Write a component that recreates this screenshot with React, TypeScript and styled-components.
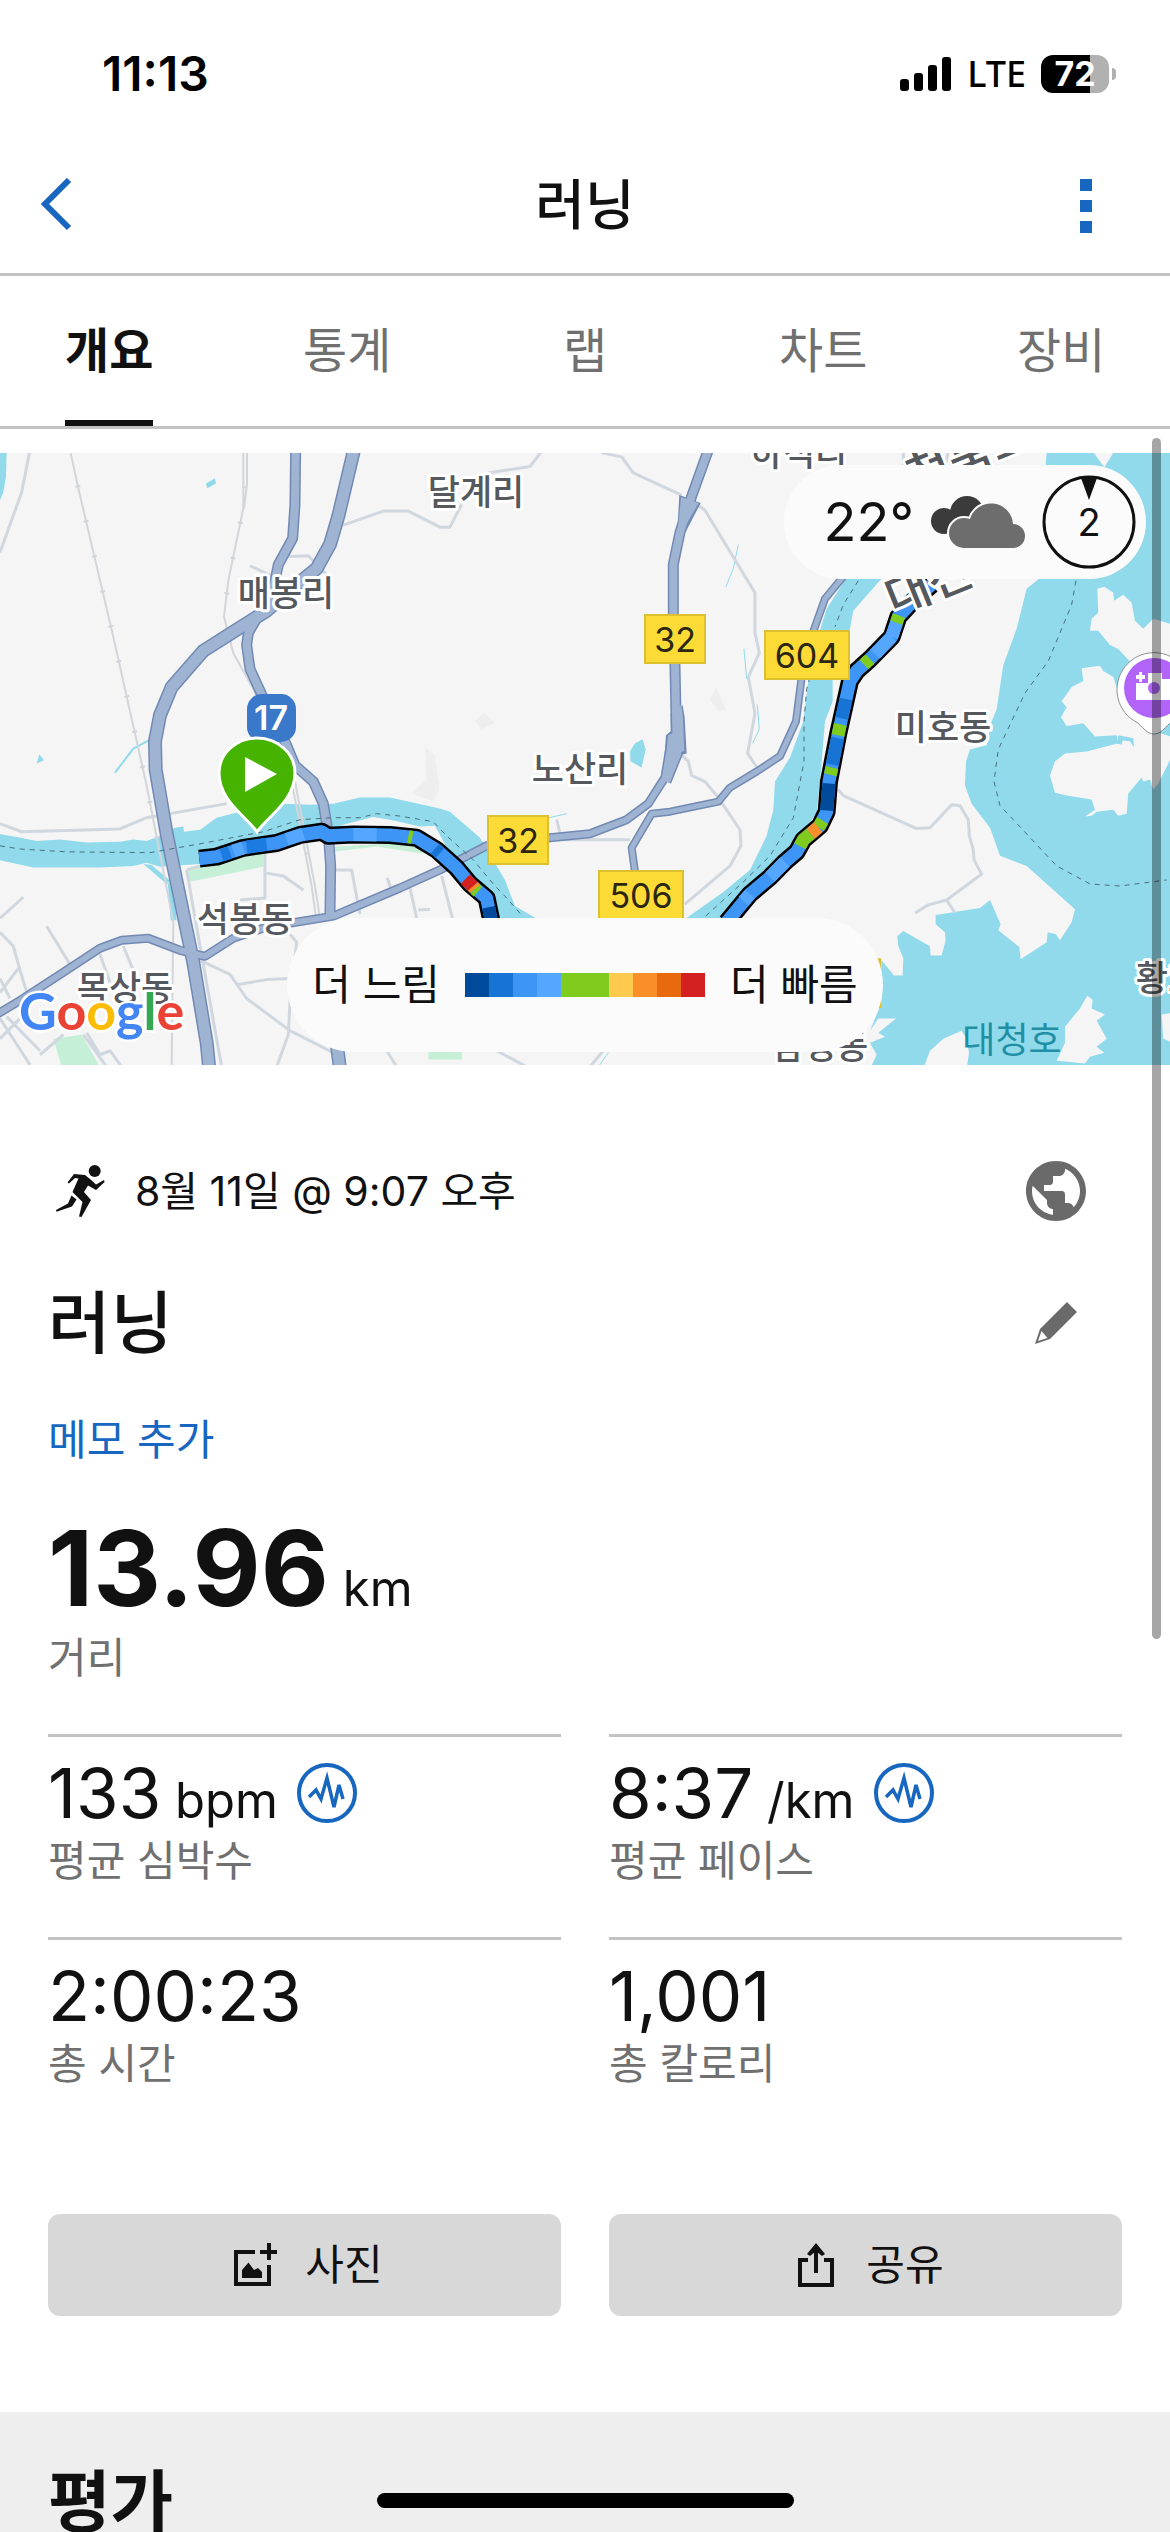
import React from "react";
import styled, { createGlobalStyle } from "styled-components";
import { MdPublic } from "react-icons/md";

const ink = "#111111";
const muted = "#707070";
const link = "#1766bf";
const rule = "#c3c3c3";
const sans = `Inter, "Noto Sans CJK KR", sans-serif`;

const GlobalStyle = createGlobalStyle`
  *, *::before, *::after { box-sizing: border-box; }
  body { margin: 0; background: #ffffff; }
  button { font: inherit; color: inherit; border: 0; padding: 0; background: none; cursor: pointer; }
  h1, h2, p, dl, dt, dd { margin: 0; font-weight: inherit; }
`;

const Screen = styled.div`
  position: relative;
  display: flex;
  flex-direction: column;
  height: 100vh;
  overflow: hidden;
  background: #ffffff;
  color: ${ink};
  font-family: ${sans};
`;

/* Status bar */

const StatusBar = styled.div`
  display: flex;
  flex: none;
  align-items: center;
  justify-content: space-between;
  height: 138px;
  padding: 10px 54px 0 102px;
  color: #000000;
`;

const Clock = styled.time`
  font-size: 48px;
  font-weight: 600;
  line-height: 54px;
`;

const StatusIcons = styled.div`
  display: flex;
  align-items: center;
  gap: 15px;
`;

const Carrier = styled.span`
  font-family: "Noto Sans", sans-serif;
  font-size: 36px;
  font-weight: 500;
  line-height: 44px;
`;

const Battery = styled.div`
  display: flex;
  align-items: center;
  gap: 3px;
`;

const BatteryBody = styled.div<{ $level: number }>`
  width: 68px;
  height: 38px;
  border-radius: 12px;
  background: linear-gradient(to right, #000000 ${(p) => p.$level}%, #b1b1b1 ${(p) => p.$level}%);
  color: #ffffff;
  font-size: 34px;
  font-weight: 700;
  line-height: 38px;
  text-align: center;
`;

const BatteryCap = styled.div`
  width: 4px;
  height: 12px;
  border-radius: 0 6px 6px 0;
  background: #b1b1b1;
`;

/* Header and tabs */

const Header = styled.header`
  display: grid;
  grid-template-columns: 96px 1fr 96px;
  flex: none;
  align-items: center;
  height: 138px;
  padding: 0 30px;
  border-bottom: 3px solid ${rule};
`;

const HeaderTitle = styled.h1`
  font-size: 54px;
  font-weight: 500;
  line-height: 66px;
  text-align: center;
`;

const HeaderButton = styled.button<{ $end?: boolean }>`
  display: flex;
  align-items: center;
  justify-content: ${(p) => (p.$end ? "flex-end" : "flex-start")};
  height: 96px;
  padding: ${(p) => (p.$end ? "0 48px 0 0" : "0 0 0 8px")};

  svg { flex: none; }
`;

const Tabs = styled.nav`
  display: flex;
  flex: none;
  justify-content: space-between;
  height: 153px;
  padding: 0 65px;
  border-bottom: 3px solid ${rule};
`;

const Tab = styled.button<{ $active?: boolean }>`
  width: 88px;
  padding-top: 6px;
  border-bottom: 6px solid ${(p) => (p.$active ? ink : "transparent")};
  color: ${(p) => (p.$active ? ink : muted)};
  font-size: 48px;
  font-weight: ${(p) => (p.$active ? 700 : 400)};
  line-height: 60px;
  white-space: nowrap;
`;

/* Map */

const MapFrame = styled.section`
  position: relative;
  flex: none;
  height: 612px;
  margin-top: 24px;
  overflow: hidden;
  background: #f5f5f5;
`;

const MapDrawing = styled.svg`
  display: block;
  width: 100%;
  height: 100%;
  font-family: ${sans};
`;

const PlaceName = styled.text`
  fill: #55585d;
  stroke: #ffffff;
  stroke-width: 6px;
  stroke-linejoin: round;
  paint-order: stroke;
  font-size: 35px;
  font-weight: 500;
  text-anchor: middle;
`;

const RegionName = styled(PlaceName)`
  font-size: 48px;
  text-anchor: start;
`;

const LakeName = styled.text`
  fill: #1f8fa3;
  font-size: 36px;
  text-anchor: middle;
`;

const BadgeText = styled.text`
  fill: #2a2611;
  font-size: 34px;
  text-anchor: middle;
`;

const HighwayText = styled(BadgeText)`
  fill: #ffffff;
  font-weight: 600;
`;

const GoogleText = styled.text`
  font-family: Lato, sans-serif;
  font-size: 52px;
  font-weight: 700;
  stroke: #ffffff;
  stroke-width: 5px;
  paint-order: stroke;
`;

const WeatherPill = styled.div`
  position: absolute;
  top: 12px;
  right: 24px;
  display: flex;
  align-items: center;
  gap: 17px;
  height: 114px;
  padding: 0 10px 0 40px;
  border-radius: 57px;
  background: #fbfbfb;
`;

const Temperature = styled.span`
  font-size: 54px;
  line-height: 66px;
`;

const Wind = styled.div`
  display: grid;
  place-items: center;
  width: 94px;
  height: 94px;
  font-size: 38px;
  line-height: 46px;

  > * { grid-area: 1 / 1; }
`;

const LegendRow = styled.div`
  position: absolute;
  bottom: 13px;
  left: 0;
  right: 0;
  display: flex;
  justify-content: center;
`;

const Legend = styled.div`
  display: flex;
  align-items: center;
  gap: 25px;
  height: 134px;
  padding: 0 25px;
  border-radius: 67px;
  background: #fbfbfb;
  font-size: 42px;
  line-height: 54px;
`;

const LegendScale = styled.div`
  display: flex;
`;

const LegendStep = styled.span<{ $color: string }>`
  width: 24px;
  height: 24px;
  background: ${(p) => p.$color};
`;

/* Activity summary */

const Summary = styled.main`
  display: flex;
  flex: none;
  flex-direction: column;
  padding: 90px 48px 96px;
`;

const SummaryRow = styled.div<{ $height: number }>`
  display: flex;
  align-items: center;
  justify-content: space-between;
  height: ${(p) => p.$height}px;
  padding-right: 30px;
`;

const DateLine = styled.p`
  display: flex;
  align-items: center;
  gap: 27px;
  padding-left: 8px;
  font-size: 41px;
  line-height: 54px;
`;

const ActivityName = styled.h2`
  font-size: 68px;
  font-weight: 500;
  line-height: 84px;
`;

const IconButton = styled.button`
  display: grid;
  place-items: center;
  width: 72px;
  height: 72px;
  color: #6a6a6a;
`;

const Spacer = styled.div`
  height: 54px;
`;

const NoteLink = styled.a`
  align-self: flex-start;
  margin-top: 45px;
  color: ${link};
  font-size: 42px;
  line-height: 60px;
  text-decoration: none;
`;

const Distance = styled.dl`
  display: flex;
  flex-direction: column-reverse;
  gap: 6px;
  margin: 38px 0 52px;
`;

const DistanceValue = styled.dd`
  font-size: 105px;
  font-weight: 700;
  line-height: 120px;
`;

const Unit = styled.span`
  font-size: 49px;
  font-weight: 400;
  line-height: 1;
`;

const StatLabel = styled.dt`
  color: ${muted};
  font-size: 42px;
  line-height: 48px;
`;

const Stats = styled.dl`
  display: grid;
  grid-template-columns: 1fr 1fr;
  column-gap: 48px;
`;

const Stat = styled.div`
  display: flex;
  flex-direction: column-reverse;
  gap: 2px;
  padding: 14px 0 52px;
  border-top: 3px solid ${rule};
`;

const StatValue = styled.dd`
  display: flex;
  align-items: center;
  gap: 19px;
  font-size: 69px;
  line-height: 84px;
`;

const Actions = styled.div`
  display: grid;
  grid-template-columns: 1fr 1fr;
  gap: 48px;
  margin-top: 74px;
`;

const ActionButton = styled.button`
  display: flex;
  align-items: center;
  justify-content: center;
  gap: 27px;
  height: 102px;
  padding-left: 8px;
  border-radius: 12px;
  background: #d8d8d8;
  font-size: 42px;
  line-height: 54px;
`;

const Review = styled.section`
  flex: 1 0 120px;
  padding: 48px;
  background: #eeeeee;
`;

const ReviewTitle = styled.h2`
  font-size: 68px;
  font-weight: 700;
  line-height: 84px;
`;

const ScrollThumb = styled.div`
  position: absolute;
  top: 438px;
  right: 9px;
  width: 9px;
  height: 1201px;
  border-radius: 5px;
  background: rgba(0, 0, 0, 0.35);
`;

const HomeRow = styled.div`
  position: absolute;
  bottom: 24px;
  left: 0;
  right: 0;
  display: flex;
  justify-content: center;
`;

const HomeIndicator = styled.div`
  width: 417px;
  height: 15px;
  border-radius: 8px;
  background: #000000;
`;

/* Icons */

const SignalIcon = () => (
  <svg width="52" height="34" viewBox="0 0 52 34" aria-hidden="true">
    <rect x="0" y="22" width="9" height="12" rx="3" />
    <rect x="14" y="16" width="9" height="18" rx="3" />
    <rect x="28" y="8" width="9" height="26" rx="3" />
    <rect x="42" y="0" width="9" height="34" rx="3" />
  </svg>
);

const BackIcon = () => (
  <svg width="36" height="56" viewBox="0 0 36 56" fill="none" stroke={link} strokeWidth="6" aria-hidden="true">
    <path d="M31 2 L7 26 L31 50" />
  </svg>
);

const MoreIcon = () => (
  <svg width="12" height="54" viewBox="0 0 12 54" fill={link} aria-hidden="true">
    <path d="M0 0H12V12H0Z M0 21H12V33H0Z M0 42H12V54H0Z" />
  </svg>
);

const CloudIcon = () => (
  <svg width="94" height="52" viewBox="0 0 94 52" aria-hidden="true">
    <g fill="#3b3b3b">
      <circle cx="36" cy="17" r="17" />
      <circle cx="13" cy="25" r="13" />
    </g>
    <path
      d="M33 52 A15 15 0 0 1 33 22 Q36 22 39 23 A22 22 0 0 1 82 28 A12 12 0 0 1 82 52Z"
      fill="#6d6d6d"
      stroke="#fbfbfb"
      strokeWidth="4"
      paintOrder="stroke"
    />
  </svg>
);

const WindDial = () => (
  <svg width="94" height="94" viewBox="0 0 94 94" aria-hidden="true">
    <circle cx="47" cy="47" r="45" fill="none" stroke={ink} strokeWidth="3" />
    <path d="M39 3 H55 L47 25Z" fill={ink} />
  </svg>
);

const RunnerIcon = () => (
  <svg width="52" height="52" viewBox="0 0 52 52" fill={ink} aria-hidden="true">
    <circle cx="38.7" cy="6" r="6" />
    <path d="M18 9 L29 10 L34 14 L40 19.5 L48 15 L48.6 17 L40 25 L32 20.5 L28 27 L35 35 L25.5 52 L23 51.5 L26.5 37 L16.5 27 L22.5 13.5 L19 13 L13 18.5 L11.5 17.5Z" />
    <path d="M15.5 30.5 L20.5 34.5 L16 41.5 L0.5 46.8 L0 45 L12 38.5Z" />
  </svg>
);

const PencilIcon = () => (
  <svg width="42" height="42" viewBox="0 0 42 42" aria-hidden="true">
    <path
      fillRule="evenodd"
      fill="currentColor"
      d="M32 0 L42 10 L15 37 L0 42 L5 27Z M6.5 29 L3 39 L12.5 36Z"
    />
  </svg>
);

const PulseIcon = () => (
  <svg width="60" height="60" viewBox="0 0 60 60" fill="none" stroke={link} aria-hidden="true">
    <circle cx="30" cy="30" r="28" strokeWidth="4" />
    <path d="M12 34 L19 27 L24 36 L30 15 L37 44 L42 22 L46 36" strokeWidth="3.5" />
  </svg>
);

const PhotoIcon = () => (
  <svg width="44" height="44" viewBox="0 0 44 44" aria-hidden="true">
    <path d="M21 9 H2 V41 H35 V22 M35 0 V17 M26 9 H43" fill="none" stroke={ink} strokeWidth="4" />
    <path d="M8 35 V27 L14.5 19.5 L20 27 L24 25 L28 29 V35Z" fill={ink} />
  </svg>
);

const ShareIcon = () => (
  <svg width="44" height="44" viewBox="-3 0 44 44" aria-hidden="true">
    <path d="M10 17 H2 V42 H34 V17 H26 M18 6 V30" fill="none" stroke={ink} strokeWidth="4" />
    <path d="M18 0 L27 11 L24 13 L18 8 L12 13 L9 11Z" fill={ink} />
  </svg>
);

const sheets = { west: 0, mid: 390, east: 770 };

const Sheet = ({ at, children }: { at: keyof typeof sheets; children: React.ReactNode }) => (
  <g transform={`translate(${sheets[at]} -13) scale(0.3333 0.4018)`}>{children}</g>
);

const Line = ({ d, color, width, dash }: { d: string; color: string; width: number; dash?: string }) => (
  <path
    d={d}
    fill="none"
    stroke={color}
    strokeWidth={width}
    strokeDasharray={dash}
    strokeLinejoin="round"
    vectorEffect="non-scaling-stroke"
  />
);

const water = "#90daec";
const land = "#f5f5f5";
const park = "#c5efd6";

type Road = { at: keyof typeof sheets; width: number; d: string };

const roads: Road[] = [
  { at: "west", width: 9, d: "M-10 1430 L60 1395 L180 1330 L300 1265 L365 1245 L445 1240 L540 1270 L615 1285 L700 1240 L800 1212 L1000 1185 L1200 1115 L1320 1070 L1460 1010 L1650 990 L1770 980 L1880 945 L1945 905 L1995 840 L2015 740" },
  { at: "east", width: 8, d: "M-405 1075 L-415 1015 L-355 930 L-300 925 L-155 900 L-120 865 L-40 825 L30 787 L78 700 L95 590 L120 500 L165 395 L225 335" },
  { at: "mid", width: 11, d: "M955 25 L905 140 L870 230 L850 310 L850 440 L855 560 L858 680 L862 780 L828 850" },
  { at: "west", width: 11, d: "M887 25 L885 160 L878 245 L835 310 L820 370 L780 430 L745 480 L740 510 L750 570 L800 660 L860 760 L885 810 L940 850 L970 905 L985 980 L992 1060 L990 1185" },
  { at: "west", width: 14, d: "M1062 25 L1015 190 L990 260 L950 320 L905 350 L800 425 L610 525 L515 615 L480 685 L465 750 L467 820 L500 980 L580 1300 L620 1500 L628 1565" },
  { at: "west", width: 14, d: "M1010 1500 L1020 1565" },
];

const lanes: { at: keyof typeof sheets; d: string }[] = [
  { at: "west", d: "M90 25 L65 130 L0 280 M1030 212 L1150 177 L1225 177 L1320 217 L1350 217 L1385 160 M0 955 L65 975 L360 968 L440 940 L680 905 M865 290 L925 288 L980 335 M750 313 L820 340 M0 1190 L70 1138 M140 1210 L210 1305 M370 1260 L410 1340 M300 1280 L330 1350 M560 1070 L600 1260 L665 1560 M600 1295 L690 1330 L740 1390 L870 1470 L1000 1525 M715 1355 L800 1343 L870 1340 M870 1230 L890 1250 L870 1400 L865 1480 L830 1560 M560 1070 L600 1060 M795 1030 L795 1140 L720 1145 M800 1078 L850 1085 L910 1120 M1000 1070 L1055 1070 L1080 1180 M1162 1090 L1172 1115 M0 1225 L40 1260 L60 1320 L90 1400 M0 1375 L60 1310 M0 1340 L30 1390 M0 1440 L90 1555 M20 1435 L120 1520 M0 1490 L60 1440 M120 1530 L190 1480 M260 1475 L300 1530 L330 1520 L365 1560 M250 1480 L320 1560" },
  { at: "mid", d: "M295 82 L420 66 L458 25 M635 32 L695 42 L730 82 L875 137 M915 157 L945 175 L1095 380 L1095 480 L1108 530 L1075 590 L1095 680 L1073 780 L1105 820 M870 780 L895 800 L905 835 L945 850 L985 890 L1050 970 L1053 1010 L1020 1060 L885 1155 M500 945 L515 995 L720 995 M60 1115 L80 1190 M85 1170 L120 1168 M155 1085 L187 1190 M320 1520 L410 1560 M640 1520 L600 1560 M-10 1520 L20 1560" },
  { at: "east", d: "M205 870 L220 885 L440 967 L480 965 L545 908 L570 910 L595 945 L598 985 L610 1020 L612 1045 L635 1080 L530 1145 L475 1157 L435 1177 M530 1145 L555 1177 M400 25 L400 70 M425 25 L425 70 M535 25 L525 70" },
];

const routeWest = "M598 1042 L650 1037 L730 1015 L830 1003 L900 983 L965 975 L985 985 L1060 982 L1170 983 L1250 990 L1310 1020 L1370 1065 L1410 1105 L1460 1140 L1475 1200";
const routeEast = "M-130 1200 L-60 1130 L0 1088 L45 1050 L80 1025 L100 995 L150 960 L170 925 L177 850 L205 730 L240 600 L260 575 L300 545 L365 490 L385 440 L430 400 L485 360";

const paceMarks: { at: keyof typeof sheets; color: string; d: string }[] = [
  { at: "west", color: "#1b7be0", d: "M665 1034 L690 1027 M740 1013 L800 1006" },
  { at: "west", color: "#54a6ff", d: "M700 1023 L730 1015 M860 994 L910 981 M1060 982 L1130 983" },
  { at: "west", color: "#7fcb1e", d: "M1225 987 L1237 989 M1424 1117 L1434 1124" },
  { at: "west", color: "#1874d4", d: "M1305 1017 L1320 1028" },
  { at: "west", color: "#d42020", d: "M1396 1093 L1420 1112" },
  { at: "west", color: "#fa8f2a", d: "M1419 1111 L1425 1117" },
  { at: "west", color: "#004a9c", d: "M1466 1163 L1475 1200" },
  { at: "east", color: "#54a6ff", d: "M0 1088 L45 1050 M-80 1148 L-60 1130 M365 490 L380 455 M315 533 L365 490" },
  { at: "east", color: "#7fcb1e", d: "M90 1011 L100 995 L122 980 M145 964 L158 947 M181 833 L186 815 M204 735 L211 708 M282 559 L300 545 M379 455 L387 437" },
  { at: "east", color: "#fa8f2a", d: "M122 980 L145 964" },
  { at: "east", color: "#004a9c", d: "M170 922 L177 855" },
  { at: "east", color: "#1874d4", d: "M187 808 L203 742 M215 693 L228 645" },
];

const yellowBadges = [
  { x: 644, y: 161, w: 62, label: "32" },
  { x: 764, y: 177, w: 86, label: "604" },
  { x: 487, y: 362, w: 62, label: "32" },
  { x: 598, y: 417, w: 86, label: "506" },
];

const places = [
  { x: 476, y: 52, name: "달계리" },
  { x: 286, y: 153, name: "매봉리" },
  { x: 245, y: 479, name: "석봉동" },
  { x: 125, y: 548, name: "목상동" },
  { x: 580, y: 329, name: "노산리" },
  { x: 943, y: 287, name: "미호동" },
  { x: 799, y: 13, name: "하석리" },
  { x: 820, y: 606, name: "삼정동" },
  { x: 1184, y: 538, name: "황호동" },
];

const RouteMap = () => (
  <MapDrawing viewBox="0 0 1170 612" preserveAspectRatio="xMidYMid slice" role="img" aria-label="러닝 경로 지도">
    <rect width="1170" height="612" fill={land} />

    <Sheet at="west">
      <g fill={water}>
        <path d="M-5 980 L50 988 L110 998 L180 994 L260 1002 L360 1000 L400 994 L440 998 L480 985 L525 965 L550 962 L552 975 L600 970 L650 940 L720 925 L850 905 L930 908 L1000 905 L1080 890 L1170 890 L1320 917 L1350 925 L1440 990 L1515 1095 L1545 1160 L1608 1190 L1608 1200 L1490 1200 L1430 1100 L1350 1030 L1305 960 L1260 962 L1170 945 L1120 938 L1040 955 L970 975 L900 985 L600 1055 L480 1062 L440 1052 L400 1060 L300 1064 L100 1064 L-5 1045Z" />
        <path d="M430 1055 L500 1105 L515 1100 L455 1058Z M503 1100 L520 1105 L530 1195 L512 1195Z M-5 30 L20 30 L18 90 L10 130 L-5 160Z M618 108 L645 95 L648 108 L622 120Z M110 805 L118 782 L132 797Z" />
      </g>
      <Line d="M445 748 L400 768 L345 828" color={water} width={2} />
      <path fill={park} d="M555 1072 L600 1060 L790 1025 L790 1062 L565 1100Z M1005 1012 L1250 1000 L1270 1030 L1130 1012 L1005 1024Z M160 1490 L245 1480 L300 1560 L185 1560Z M1285 1520 H1385 V1542 H1285Z" />
    </Sheet>
    <Sheet at="mid">
      <path fill={water} d="M720 775 L735 755 L758 745 L767 770 L755 815 L722 800Z" />
      <Line d="M1045 260 L1030 320 L1008 365 M1062 520 L1070 595 M1102 658 L1108 720 L1088 755 M478 940 L530 930 M655 1525 L625 1560" color={water} width={1} />
      <path fill="#eeeeef" d="M255 700 L280 678 L315 703 L275 720Z M105 765 L135 785 L148 870 L130 900 L65 880 L110 845Z M960 645 L978 615 L1008 670 L985 675Z" />
    </Sheet>
    <Sheet at="east">
      <path
        fill={water}
        d="M232 340 L170 420 L140 500 L115 600 L100 700 L60 790 L15 850 L10 920 L-10 985 L-60 1070 L-140 1125 L-260 1195 L-150 1195 L-20 1090 L60 1010 L140 930 L150 850 L165 700 L188 650 L188 590 L240 470 L250 425 L335 345Z"
      />
      <path
        fill={water}
        d="M830 25 L808 345 L770 370 L740 470 L700 560 L680 670 L665 700 L650 760 L600 770 L588 800 L585 860 L605 905 L660 965 L690 1035 L770 1060 L915 1168 L905 1200 L870 1245 L858 1230 L833 1225 L830 1250 L752 1292 L748 1262 L685 1220 L692 1205 L660 1145 L630 1165 L497 1182 L497 1205 L525 1225 L527 1245 L515 1283 L482 1283 L480 1260 L400 1222 L382 1235 L385 1260 L400 1290 L398 1333 L372 1333 L335 1295 L335 1400 L300 1470 L325 1440 L378 1440 L325 1475 L345 1485 L300 1500 L320 1530 L300 1565 L460 1565 L480 1520 L520 1490 L575 1470 L590 1490 L597 1525 L590 1565 L1210 1565 L1210 25Z"
      />
      <path
        fill={land}
        d="M965 25 L1003 68 L1035 25Z M982 370 L1003 365 L1030 380 L1032 400 L1060 385 L1085 405 L1095 450 L1120 470 L1150 445 L1210 460 L1210 545 L1090 560 L1045 520 L1020 510 L985 475 L960 475 L965 445 L985 430Z M935 568 L990 562 L1000 575 L1030 590 L1050 640 L1130 720 L1210 740 L1210 780 L1165 855 L1150 870 L1140 845 L1120 850 L1115 840 L1075 880 L1070 930 L1045 935 L1030 920 L980 925 L965 935 L945 937 L975 920 L965 895 L890 885 L855 878 L840 835 L855 800 L885 780 L950 775 L1045 755 L1040 735 L975 738 L940 705 L890 712 L873 690 L890 665 L875 650 L905 615 L940 600Z M860 1545 L885 1500 L885 1460 L930 1415 L952 1383 L968 1393 L965 1415 L1005 1430 L980 1445 L1010 1490 L980 1510 L1003 1525 L960 1535 L945 1552Z M1175 1430 L1210 1425 L1210 1500 L1180 1490Z"
      />
      <path fill={water} d="M1045 735 L1090 742 L1092 765 L1080 750 L1058 748 L1055 758 L1042 756Z" />
      <rect x="300" y="1290" width="34" height="124" fill="#dcc02e" />
    </Sheet>

    <Sheet at="west">
      <Line d="M210 25 L235 120 L340 490 L440 860 L475 1010 L520 1200 L515 1560 M730 25 L730 170 L685 350 L672 440 L700 530 L760 620 L875 850 L935 1110 L950 1200 M741 25 L741 110 L732 170 M885 850 L945 1110 L962 1200" color="#d2d5d9" width={2} />
      <Line d="M210 25 L235 120 L340 490 L440 860 L475 1010 M735 25 L735 100 L730 170 L685 350 L672 440 L700 530 M880 850 L940 1110" color="#d2d5d9" width={5} dash="2 34" />
    </Sheet>
    {lanes.map((lane) => (
      <Sheet key={lane.at} at={lane.at}>
        <Line d={lane.d} color="#d0d7de" width={3} />
      </Sheet>
    ))}
    {roads.map((road) => (
      <Sheet key={road.d} at={road.at}>
        <Line d={road.d} color="#7289b3" width={road.width} />
      </Sheet>
    ))}
    <Sheet at="mid">
      <path fill="#7289b3" d="M842 680 L878 660 L884 690 L890 780 L865 785 L835 850 L820 830 L828 735 L842 725Z M868 137 L932 157 L880 240 L862 225Z" />
    </Sheet>
    {roads.map((road) => (
      <Sheet key={road.d} at={road.at}>
        <Line d={road.d} color="#9fb4d3" width={road.width - 3} />
      </Sheet>
    ))}
    <Sheet at="mid">
      <path fill="#9fb4d3" d="M848 670 L874 660 L879 690 L883 774 L862 780 L832 838 L826 830 L834 735 L848 730Z M873 142 L926 157 L874 232 L864 220Z" />
    </Sheet>

    <Sheet at="west">
      <Line d="M0 1010 L60 1018 L200 1025 L450 1027 L600 1005 L790 975 L900 945 L1000 940 L1080 940 L1130 930 L1200 936 L1300 950 L1340 985 L1420 1045 L1480 1105 L1520 1140 L1570 1187" color="#4b6f7c" width={1} dash="5 5" />
    </Sheet>
    <Sheet at="east">
      <Line d="M265 350 L220 410 L195 465 M120 590 L110 620 L102 700 L102 800 L70 940 L0 1035 L-80 1100 L-200 1190 M918 350 L905 410 L835 550 L765 630 L685 770 L672 850 L690 910 L730 945 L860 1060 L960 1105 L1050 1110 L1190 1095" color="#4b6f7c" width={1} dash="5 5" />
    </Sheet>

    <Sheet at="west">
      <Line d={routeWest} color="#000000" width={18} />
      <Line d={routeWest} color="#3d96f5" width={13} />
    </Sheet>
    <Sheet at="east">
      <Line d={routeEast} color="#000000" width={18} />
      <Line d={routeEast} color="#3d96f5" width={13} />
    </Sheet>
    {paceMarks.map((mark) => (
      <Sheet key={mark.d} at={mark.at}>
        <Line d={mark.d} color={mark.color} width={13} />
      </Sheet>
    ))}

    {places.map((place) => (
      <PlaceName key={place.name} x={place.x} y={place.y}>
        {place.name}
      </PlaceName>
    ))}
    <RegionName transform="translate(894 163) rotate(-22)">대전</RegionName>
    <RegionName transform="translate(915 42) rotate(-22)">청북도</RegionName>
    <LakeName x="1012" y="600">대청호</LakeName>

    {yellowBadges.map((badge) => (
      <g key={`${badge.x}-${badge.y}`}>
        <rect x={badge.x + 1} y={badge.y + 1} width={badge.w - 2} height="48" fill="#fddb36" stroke="#dcc02e" strokeWidth="2" />
        <BadgeText x={badge.x + badge.w / 2} y={badge.y + 38}>
          {badge.label}
        </BadgeText>
      </g>
    ))}

    <rect x="247" y="241" width="49" height="48" rx="15" fill="#3a78c9" />
    <HighwayText x="271" y="277">17</HighwayText>

    <path
      d="M257 379 C247 364 219 348 219 320 A38 35 0 0 1 295 320 C295 348 267 364 257 379Z"
      fill="#45b300"
      stroke="#ffffff"
      strokeWidth="3"
    />
    <path d="M245 304 L277 321 L245 339Z" fill="#ffffff" />

    <path d="M1154 281 C1148 281 1144 276 1138 270 A37 37 0 1 1 1170 270 C1164 276 1160 281 1154 281Z" fill="#ffffff" stroke="#8c9296" strokeWidth="1" />
    <circle cx="1154" cy="235" r="30" fill="#b164f7" />
    <path d="M1136 230 H1148 V220 H1162 V226 H1172 V247 H1136Z M1136 222 H1139 V219 H1142 V222 H1145 V226 H1142 V229 H1139 V226 H1136Z" fill="#ffffff" />
    <circle cx="1154" cy="235" r="6" fill="#b164f7" />

    <GoogleText x="19" y="577">
      <tspan fill="#4285f4">G</tspan>
      <tspan fill="#ea4335">o</tspan>
      <tspan fill="#fbbc05">o</tspan>
      <tspan fill="#4285f4">g</tspan>
      <tspan fill="#34a853">l</tspan>
      <tspan fill="#ea4335">e</tspan>
    </GoogleText>
  </MapDrawing>
);

const legendColors = [
  "#004a9c", "#1874d4", "#3d96f5", "#54a6ff", "#7fcb1e",
  "#7fcb1e", "#ffca4d", "#fa8f2a", "#e9690f", "#d42020",
];

const tabs = ["개요", "통계", "랩", "차트", "장비"];

const stats = [
  { value: "133", unit: "bpm", label: "평균 심박수", pulse: true },
  { value: "8:37", unit: "/km", label: "평균 페이스", pulse: true },
  { value: "2:00:23", label: "총 시간" },
  { value: "1,001", label: "총 칼로리" },
];

export default function App() {
  return (
    <Screen>
      <GlobalStyle />
      <StatusBar>
        <Clock>11:13</Clock>
        <StatusIcons>
          <SignalIcon />
          <Carrier>LTE</Carrier>
          <Battery>
            <BatteryBody $level={72}>72</BatteryBody>
            <BatteryCap />
          </Battery>
        </StatusIcons>
      </StatusBar>

      <Header>
        <HeaderButton aria-label="뒤로">
          <BackIcon />
        </HeaderButton>
        <HeaderTitle>러닝</HeaderTitle>
        <HeaderButton $end aria-label="더 보기">
          <MoreIcon />
        </HeaderButton>
      </Header>

      <Tabs>
        {tabs.map((tab, i) => (
          <Tab key={tab} $active={i === 0}>
            {tab}
          </Tab>
        ))}
      </Tabs>

      <MapFrame>
        <RouteMap />
        <WeatherPill>
          <Temperature>22°</Temperature>
          <CloudIcon />
          <Wind>
            <WindDial />
            <span>2</span>
          </Wind>
        </WeatherPill>
        <LegendRow>
          <Legend>
            <span>더 느림</span>
            <LegendScale>
              {legendColors.map((color, i) => (
                <LegendStep key={i} $color={color} />
              ))}
            </LegendScale>
            <span>더 빠름</span>
          </Legend>
        </LegendRow>
      </MapFrame>

      <Summary>
        <SummaryRow $height={72}>
          <DateLine>
            <RunnerIcon />
            <span>8월 11일 @ 9:07 오후</span>
          </DateLine>
          <IconButton aria-label="공개 범위">
            <MdPublic size={72} />
          </IconButton>
        </SummaryRow>
        <Spacer />
        <SummaryRow $height={84}>
          <ActivityName>러닝</ActivityName>
          <IconButton aria-label="이름 편집">
            <PencilIcon />
          </IconButton>
        </SummaryRow>
        <NoteLink href="#note">메모 추가</NoteLink>

        <Distance>
          <StatLabel>거리</StatLabel>
          <DistanceValue>
            13.96<Unit> km</Unit>
          </DistanceValue>
        </Distance>

        <Stats>
          {stats.map((stat) => (
            <Stat key={stat.label}>
              <StatLabel>{stat.label}</StatLabel>
              <StatValue>
                <span>
                  {stat.value}
                  {stat.unit && <Unit> {stat.unit}</Unit>}
                </span>
                {stat.pulse && <PulseIcon />}
              </StatValue>
            </Stat>
          ))}
        </Stats>

        <Actions>
          <ActionButton>
            <PhotoIcon />
            사진
          </ActionButton>
          <ActionButton>
            <ShareIcon />
            공유
          </ActionButton>
        </Actions>
      </Summary>

      <Review>
        <ReviewTitle>평가</ReviewTitle>
      </Review>

      <ScrollThumb />
      <HomeRow>
        <HomeIndicator />
      </HomeRow>
    </Screen>
  );
}
